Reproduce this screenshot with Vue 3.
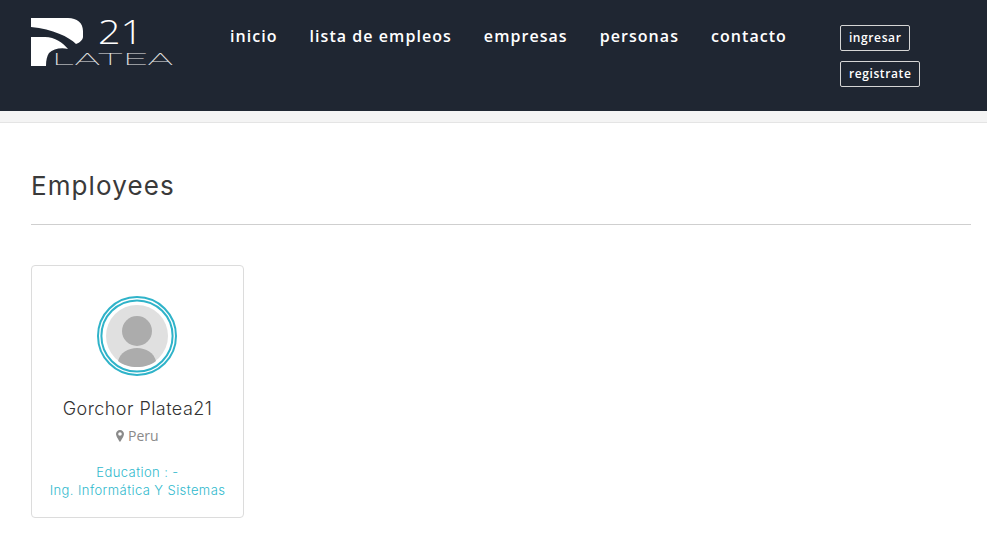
<script setup>
const navLinks = ['inicio', 'lista de empleos', 'empresas', 'personas', 'contacto']
const authLinks = ['ingresar', 'registrate']

const employees = [
  { name: 'Gorchor Platea21', location: 'Peru', education: 'Education : -', career: 'Ing. Informática Y Sistemas' },
]
</script>

<template>
  <div class="page">
    <header class="topbar">
      <a class="logo" href="#">
        <svg width="142" height="64" viewBox="0 -10 142 64">
          <path fill="#fff" d="M0 0H37C46 0 52 5 52 13V19C52 22 48 25 45 26C38 19 22 11 0 9Z" />
          <path fill="#fff" d="M0 19H14C24 19 32 25 37 31C30 29 22 31 18 35C16 38 15 42 15 48H0Z" />
          <text class="logo-num" x="67" y="26" textLength="45" lengthAdjust="spacingAndGlyphs">21</text>
          <text class="logo-word" x="21" y="47" textLength="121" lengthAdjust="spacingAndGlyphs">LATEA</text>
        </svg>
      </a>
      <nav class="menu">
        <a v-for="link in navLinks" :key="link" href="#" class="menu-link">{{ link }}</a>
      </nav>
      <div class="auth">
        <a v-for="link in authLinks" :key="link" href="#" class="auth-btn">{{ link }}</a>
      </div>
    </header>
    <div class="strip"></div>

    <main class="content">
      <h1 class="title">Employees</h1>
      <hr class="rule" />
      <div class="grid">
        <article v-for="emp in employees" :key="emp.name" class="card">
          <svg class="avatar" width="80" height="80" viewBox="0 0 80 80">
            <circle cx="40" cy="40" r="39" fill="none" stroke="#2fb3c9" stroke-width="2" />
            <circle cx="40" cy="40" r="35.6" fill="none" stroke="#2fb3c9" stroke-width="2" />
            <circle cx="40" cy="40" r="31" fill="#e0e0e0" />
            <circle cx="40" cy="35" r="15" fill="#acacac" />
            <path fill="#acacac" d="M21 65C23 57 31 52 40 52C49 52 57 57 59 65C54 69 47 71 40 71C33 71 26 69 21 65Z" />
          </svg>
          <h2 class="name">{{ emp.name }}</h2>
          <p class="location">
            <svg class="pin" width="8" height="12" viewBox="0 0 8 12">
              <path fill="#8a8a8a" fill-rule="evenodd" d="M4 0C6.2 0 8 1.8 8 4C8 6 5.5 10 4 12C2.5 10 0 6 0 4C0 1.8 1.8 0 4 0ZM4 2.2A1.8 1.8 0 1 0 4 5.8A1.8 1.8 0 1 0 4 2.2Z" />
            </svg>
            {{ emp.location }}
          </p>
          <p class="edu">{{ emp.education }}</p>
          <p class="edu">{{ emp.career }}</p>
        </article>
      </div>
    </main>
  </div>
</template>

<style scoped>
.page {
  width: 987px;
  height: 560px;
  overflow: hidden;
  background: #fff;
  font-family: "Open Sans", sans-serif;
}

.topbar {
  height: 111px;
  background: #1f2632;
  display: flex;
  align-items: flex-start;
  box-sizing: border-box;
  padding-left: 31px;
}

.logo {
  display: block;
  margin-top: 8px;
  width: 142px;
  height: 64px;
}

.logo-num {
  fill: #fff;
  font-family: "Open Sans", sans-serif;
  font-size: 33px;
  font-weight: 300;
}

.logo-word {
  fill: #e8e8e8;
  font-family: Roboto, sans-serif;
  font-size: 17px;
  font-weight: 100;
}

.menu {
  display: flex;
  gap: 32px;
  margin-left: 57px;
  margin-top: 25px;
}

.menu-link {
  color: #fff;
  text-decoration: none;
  font-size: 16px;
  font-weight: 600;
  line-height: 22px;
  letter-spacing: 1.05px;
}

.auth {
  display: flex;
  flex-direction: column;
  align-items: flex-start;
  gap: 10px;
  margin-left: 53px;
  margin-top: 25px;
}

.auth-btn {
  color: #fff;
  text-decoration: none;
  border: 1px solid #d5d5d5;
  border-radius: 2px;
  padding: 0 8px;
  font-size: 12px;
  font-weight: 600;
  line-height: 24px;
  letter-spacing: 0.6px;
}

.strip {
  height: 11px;
  background: #f4f4f4;
  border-bottom: 1px solid #e4e4e4;
}

.content {
  padding: 0 16px 0 31px;
}

.title {
  margin: 46px 0 0;
  font-family: Inter, sans-serif;
  font-size: 26px;
  font-weight: 400;
  line-height: 34px;
  letter-spacing: 1.1px;
  color: #3a3a3a;
}

.rule {
  margin: 21px 0 40px;
  border: 0;
  border-top: 1px solid #cfcfcf;
}

.grid {
  display: flex;
}

.card {
  width: 213px;
  height: 253px;
  box-sizing: border-box;
  border: 1px solid #dcdcdc;
  border-radius: 4px;
  padding-top: 30px;
  text-align: center;
}

.avatar {
  display: block;
  margin-left: 65px;
}

.name {
  margin: 22px 0 0;
  font-family: Inter, sans-serif;
  font-size: 18px;
  font-weight: 300;
  line-height: 22px;
  letter-spacing: 0.45px;
  color: #333;
}

.location {
  margin: 6px 0 17px;
  font-size: 14px;
  line-height: 20px;
  color: #8a8a8a;
}

.pin {
  vertical-align: -1px;
}

.edu {
  margin: 0;
  font-family: Inter, sans-serif;
  font-size: 13px;
  font-weight: 300;
  line-height: 18px;
  letter-spacing: 0.42px;
  color: #2fb9cd;
}
</style>
